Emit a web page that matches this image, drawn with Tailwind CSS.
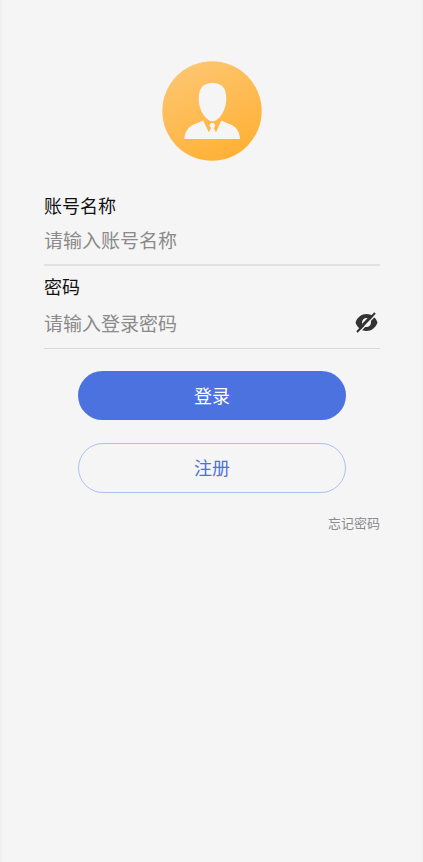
<!DOCTYPE html>
<html lang="zh-CN">
<head>
<meta charset="utf-8">
<meta name="viewport" content="width=device-width, initial-scale=1">
<title>登录</title>
<script src="https://cdn.jsdelivr.net/npm/@tailwindcss/browser@4"></script>
</head>
<body class="min-h-screen border-l-2 border-r border-[#f0f0f0] bg-[#f5f5f5] font-['Noto_Sans_CJK_SC',sans-serif]">
<main class="flex flex-col px-[42px] pt-[61px]">
  <svg class="size-[100px] self-center" viewBox="0 0 100 100" role="img" aria-label="头像">
    <defs>
      <linearGradient id="sun" x1="0.25" y1="0" x2="0.75" y2="1">
        <stop offset="0" stop-color="#fdc671"/>
        <stop offset="1" stop-color="#ffb032"/>
      </linearGradient>
    </defs>
    <circle cx="50" cy="50" r="49.7" fill="url(#sun)"/>
    <g fill="#f5f5f5">
      <path d="M50.500 22C60 22 64.300 27 64.300 38C64.300 49 57 60.300 50.500 60.300C44 60.300 36.700 49 36.700 38C36.700 27 41 22 50.500 22Z"/>
      <path d="M41.200 59.600L46.800 71.200L49 67L47.400 64.600L49 62H51.800L53.400 64.600L51.800 67L54 71.200L59.400 59.600C65 62.500 72 64 75 68.500C77 71.500 77.800 74 78 78H22.300C22.500 74 23.400 71.500 25.500 68.500C28.500 64 35.500 62.500 41.200 59.600Z"/>
    </g>
  </svg>

  <form class="mt-8 flex flex-col">
    <label for="account" class="text-lg leading-6 text-[#111]">账号名称</label>
    <div class="flex h-[49px] items-center border-b-2 border-[#e1e1e1] pb-0.5">
      <input id="account" type="text" placeholder="请输入账号名称" autocomplete="username" class="h-full w-full min-w-0 bg-transparent text-[19px] text-[#333] outline-none placeholder:text-[#8a8a8a]">
    </div>

    <label for="password" class="mt-2 text-lg leading-6 text-[#111]">密码</label>
    <div class="flex h-[51px] items-center border-b border-[#d9d9d9] pb-0.5">
      <input id="password" type="password" placeholder="请输入登录密码" autocomplete="current-password" class="h-full min-w-0 flex-1 bg-transparent text-[19px] text-[#333] outline-none placeholder:text-[#8a8a8a]">
      <button type="button" aria-label="显示密码" class="mr-0.5 size-6">
        <svg viewBox="0 0 24 24" class="size-6">
          <path fill="#333" fill-rule="evenodd" d="M1.500 12.500C3.500 7 7.500 4 12.500 4S21.500 7 23.500 12.500C21.500 18 17.500 21 12.500 21S3.500 18 1.500 12.500ZM12.500 8A4.500 4.500 0 1 0 12.500 17A4.500 4.500 0 1 0 12.500 8Z"/>
          <path d="M4.500 23L22.500 4" stroke="#f5f5f5" stroke-width="1.500"/>
          <path d="M3 22L21 3" stroke="#333" stroke-width="2"/>
          <path d="M8.500 14.500L14.500 8.300" stroke="#333" stroke-width="1.500"/>
        </svg>
      </button>
    </div>

    <button type="submit" class="mt-[22px] h-[49px] w-4/5 self-center rounded-full bg-[#4c72df] pb-0.5 text-lg text-white">登录</button>
    <button type="button" class="mt-[23px] h-[50px] w-4/5 self-center rounded-full border border-[#acc0f0] pb-0.5 text-lg text-[#4c72df]">注册</button>
    <a href="#" class="mt-5 self-end text-[13px] leading-5 text-[#8a8a8a]">忘记密码</a>
  </form>
</main>
</body>
</html>
